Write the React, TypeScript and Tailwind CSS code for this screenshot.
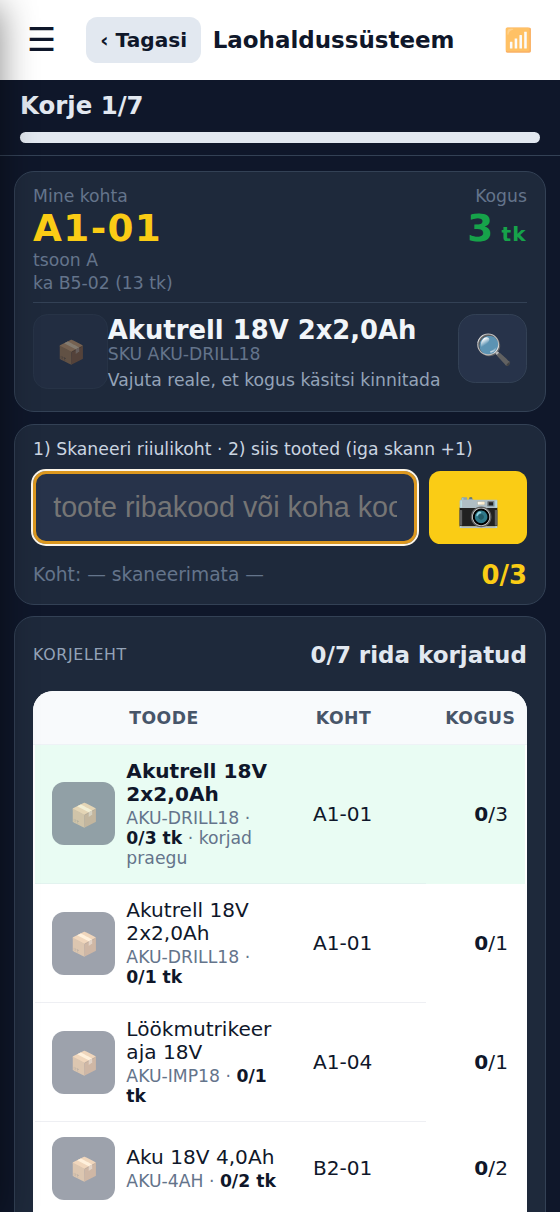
import type { ReactNode } from "react";

type Line = {
  name: string;
  sku: string;
  qty: number;
  place: string;
  height: string;
  active?: boolean;
};

const lines: Line[] = [
  { name: "Akutrell 18V 2x2,0Ah", sku: "AKU-DRILL18", qty: 3, place: "A1-01", height: "h-[139.4px]", active: true },
  { name: "Akutrell 18V 2x2,0Ah", sku: "AKU-DRILL18", qty: 1, place: "A1-01", height: "h-[119.1px]" },
  { name: "Löökmutrikeeraja 18V", sku: "AKU-IMP18", qty: 1, place: "A1-04", height: "h-[119.1px]" },
  { name: "Aku 18V 4,0Ah", sku: "AKU-4AH", qty: 2, place: "B2-01", height: "h-[93.3px]" },
];

function Card({ className, children }: { className: string; children: ReactNode }) {
  return (
    <section className={`rounded-[20px] border border-[#334155] bg-[#1e293b] px-[17.7px] ${className}`}>
      {children}
    </section>
  );
}

function PickRow({ line }: { line: Line }) {
  return (
    <div className={`flex ${line.height} ${line.active ? "bg-[#e9fcf3]" : "bg-white"}`}>
      <div
        className={`flex w-[390.5px] items-center border-b pl-[16.7px] ${
          line.active ? "border-[#e2f3ef]" : "border-[#eeeff3]"
        }`}
      >
        <div className="flex h-[63px] w-[63px] shrink-0 items-center justify-center rounded-[12px] bg-[#27334a] text-[23px] opacity-45">
          <span className="relative top-px left-px">📦</span>
        </div>
        <div className="ml-[11.6px] w-[151px] shrink-0">
          <div className={`text-[20.1px] leading-[23.1px] wrap-break-word ${line.active ? "font-bold" : ""}`}>
            {line.name}
          </div>
          <div className="mt-[2px] text-[17.23px] leading-[20.2px] text-[#64748b]">
            {line.sku} · <b className="text-[#0f172a]">0/{line.qty} tk</b>
            {line.active && " · korjad praegu"}
          </div>
        </div>
        <div className="ml-[35.6px] text-[20.1px]">{line.place}</div>
      </div>
      <div className="flex flex-1 items-center justify-end border-b border-transparent pr-[17px] text-[20.1px]">
        <b>0</b>/{line.qty}
      </div>
    </div>
  );
}

export default function App() {
  return (
    <div className="relative flex h-[1212px] w-[560px] flex-col overflow-hidden bg-[#0f172a] font-['DejaVu_Sans',sans-serif] text-[#e2e8f0]">
      <header className="flex h-[80.4px] shrink-0 items-center bg-white text-[#0f172a]">
        <button className="ml-[26.4px] w-[30px] text-[32.5px] leading-none">☰</button>
        <button className="ml-[29.8px] flex h-[46px] w-[115px] items-center justify-center rounded-[11.5px] bg-[#e2e8f0] text-[20.1px] font-bold">
          ‹ Tagasi
        </button>
        <h1 className="ml-[11.5px] text-[22.97px] font-bold">Laohaldussüsteem</h1>
        <span className="mr-[27px] ml-auto text-[23px] leading-none opacity-60">📶</span>
      </header>

      <div className="h-[75.8px] shrink-0 border-b border-[#334155] px-[20.1px] pt-[12px]">
        <div className="text-[24.4px] leading-[28.4px] font-bold">Korje 1/7</div>
        <div className="mt-[11.2px] h-[11.5px] rounded-full bg-[#e2e8f0]" />
      </div>

      <main className="flex flex-col px-[14.4px] pt-[14.8px]">
        <Card className="h-[241px] pt-[14.4px]">
          <div className="flex justify-between text-[17.23px] leading-[20px] text-[#64748b]">
            <div>
              <div>Mine kohta</div>
              <div className="mt-[0.4px] text-[37.33px] leading-[43.2px] font-bold tracking-[1.35px] text-[#facc15]">A1-01</div>
              <div>tsoon A</div>
              <div className="mt-[3px]">ka B5-02 (13 tk)</div>
            </div>
            <div className="text-right">
              <div>Kogus</div>
              <div className="mt-[0.4px] text-[37.33px] leading-[43.2px] font-bold text-[#16a34a]">
                3<span className="text-[20.1px] tracking-[1.2px]"> tk</span>
              </div>
            </div>
          </div>
          <div className="mt-[9px] flex border-t border-[#334155] pt-[11.4px]">
            <div className="flex h-[74.7px] w-[74.7px] shrink-0 items-center justify-center rounded-[14.4px] border border-[#334155] bg-[#27334a] text-[23px] opacity-45">
              <span className="relative top-px left-px">📦</span>
            </div>
            <div className="flex-1 pt-[0.4px] text-[17.23px] leading-[20px] whitespace-nowrap text-[#64748b]">
              <div className="text-[25.85px] leading-[30px] font-bold text-[#f1f5f9]">Akutrell 18V 2x2,0Ah</div>
              <div className="-mt-[0.6px]">SKU AKU-DRILL18</div>
              <div className="mt-[5.7px] text-[#94a3b8]">Vajuta reale, et kogus käsitsi kinnitada</div>
            </div>
            <button className="flex h-[69px] w-[69px] shrink-0 items-center justify-center rounded-[17.2px] border border-[#334155] bg-[#27334a] text-[30px] leading-none">
              <span className="relative top-px left-px">🔍</span>
            </button>
          </div>
        </Card>

        <Card className="mt-[12px] h-[180.6px] pt-[13.8px]">
          <div className="text-[17.23px] leading-[20px] text-[#cbd5e1]">1) Skaneeri riiulikoht · 2) siis tooted (iga skann +1)</div>
          <div className="mt-[12px] flex h-[73px] gap-[11.5px]">
            <input
              className="min-w-0 flex-1 rounded-[13px] border-[3px] border-[#dc981f] bg-[#27334a] px-[17.1px] font-['Liberation_Sans',sans-serif] text-[28.7px] outline-2 outline-[#fdf6e8] outline-solid placeholder:text-[#757575]"
              placeholder="toote ribakood või koha kood"
            />
            <button className="flex w-[98px] items-center justify-center rounded-[11.5px] bg-[#facc15] text-[34.5px] leading-none">
              <span className="relative top-0.5 left-px">📷</span>
            </button>
          </div>
          <div className="mt-[15.8px] flex items-center justify-between">
            <span className="text-[18.67px] text-[#64748b]">Koht: — skaneerimata —</span>
            <b className="text-[25.85px] leading-[30px] text-[#facc15]">0/3</b>
          </div>
        </Card>

        <Card className="mt-[11.6px] h-[680px] pt-[24.6px]">
          <div className="flex h-[27px] items-center justify-between">
            <span className="text-[15.8px] tracking-[0.66px] text-[#94a3b8]">KORJELEHT</span>
            <b className="text-[22.97px]">0/7 rida korjatud</b>
          </div>
          <div className="mt-[22.4px] h-[620px] overflow-hidden rounded-[20px] bg-white px-[2px] text-[#0f172a]">
            <div className="-mx-[2px] flex h-[53.6px] items-center border-b border-[#eef2f6] bg-[#f8fafc] pt-[2px] text-[17.23px] font-bold tracking-[0.5px] text-[#475569]">
              <span className="ml-[96.1px] w-[186.7px]">TOODE</span>
              <span>KOHT</span>
              <span className="mr-[11.5px] ml-auto">KOGUS</span>
            </div>
            {lines.map((line, i) => (
              <PickRow key={i} line={line} />
            ))}
          </div>
        </Card>
      </main>

      <aside className="absolute top-0 -left-[300px] h-full w-[300px] shadow-[0_6px_34px_rgba(0,0,0,0.46)]" />
    </div>
  );
}
